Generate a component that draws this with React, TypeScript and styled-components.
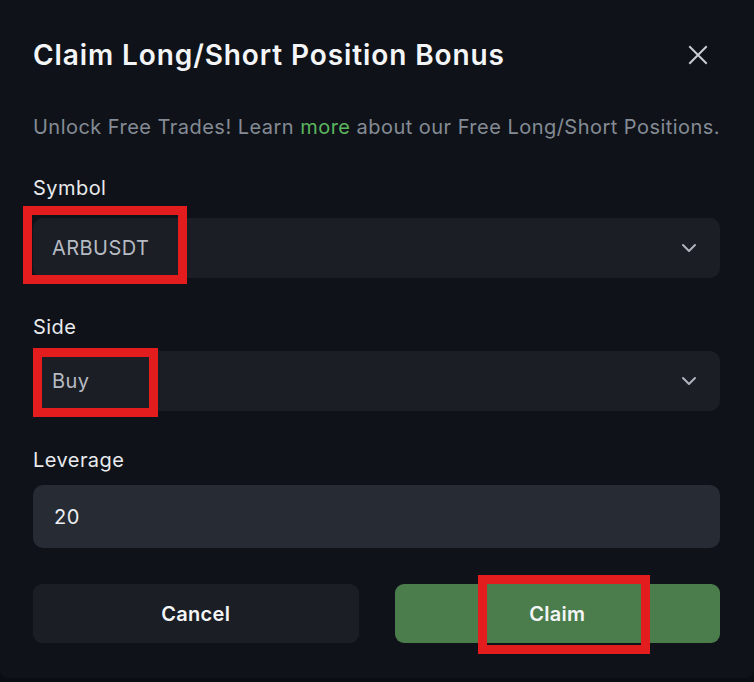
import React from "react";
import styled, { createGlobalStyle } from "styled-components";

const GlobalStyle = createGlobalStyle`
  html, body {
    margin: 0;
    padding: 0;
    background: #0a0d12;
  }
  * { box-sizing: border-box; }
`;

const Dialog = styled.div`
  width: 754px;
  padding: 38px 34px 35px 33px;
  background: #0f1319;
  border-radius: 0 0 8px 8px;
  font-family: Inter, "Noto Sans", sans-serif;
  display: flex;
  flex-direction: column;
`;

const Header = styled.div`
  display: flex;
  align-items: center;
  justify-content: space-between;
  height: 34px;
`;

const Title = styled.h2`
  margin: 0;
  font-size: 28px;
  line-height: 34px;
  font-weight: 600;
  color: #f4f5f7;
  letter-spacing: 0.9px;
`;

const CloseButton = styled.button`
  width: 20px;
  height: 20px;
  margin-right: 12px;
  padding: 0;
  border: 0;
  background: transparent;
  display: flex;
  align-items: center;
  justify-content: center;
  color: #c9cdd3;
  cursor: pointer;
`;

const Body = styled.div`
  margin-top: 43px;
  display: flex;
  flex-direction: column;
  gap: 37px;
`;

const Subtitle = styled.p`
  margin: 0;
  font-size: 20px;
  line-height: 24px;
  color: #858b95;
  letter-spacing: 0.47px;
  white-space: nowrap;
`;

const MoreLink = styled.a`
  color: #5db55e;
  text-decoration: none;
`;

const Field = styled.div<{ $gap: number }>`
  display: flex;
  flex-direction: column;
  gap: ${(p) => p.$gap}px;
`;

const Label = styled.label`
  font-size: 20px;
  line-height: 24px;
  color: #e8eaed;
  letter-spacing: 0.45px;
`;

const FieldBox = styled.div`
  position: relative;
`;

const Select = styled.div`
  height: 60px;
  border-radius: 10px;
  background: #1b1e25;
  display: flex;
  align-items: center;
  justify-content: space-between;
  padding: 0 19px 0 19px;
  font-size: 20px;
  color: #b6bac2;
  letter-spacing: 0.45px;
`;

const Chevron = styled.span`
  display: flex;
  color: #aeb3bc;
`;

const Input = styled.div`
  height: 63px;
  border-radius: 10px;
  background: #272b33;
  display: flex;
  align-items: center;
  padding: 0 21px;
  font-size: 20px;
  color: #eceef1;
  letter-spacing: 0.45px;
`;

const Actions = styled.div`
  display: grid;
  grid-template-columns: 1fr 1fr;
  gap: 36px;
  margin-top: -1px;
`;

const ActionButton = styled.button<{ $primary?: boolean }>`
  position: relative;
  height: 59px;
  border: 0;
  border-radius: 9px;
  background: ${(p) => (p.$primary ? "#4a7d4b" : "#1b1e25")};
  color: #f4f5f7;
  font-family: Inter, "Noto Sans", sans-serif;
  font-size: 20px;
  font-weight: 600;
  letter-spacing: 0.3px;
  cursor: pointer;
`;

const Highlight = styled.div<{ $l: number; $t: number; $w: number; $h: number }>`
  position: absolute;
  left: ${(p) => p.$l}px;
  top: ${(p) => p.$t}px;
  width: ${(p) => p.$w}px;
  height: ${(p) => p.$h}px;
  border: 9px solid #e31c1d;
  pointer-events: none;
`;

const ChevronIcon = () => (
  <svg width="24" height="24" viewBox="0 0 24 24" fill="none" stroke="currentColor" strokeWidth="2" strokeLinecap="round" strokeLinejoin="round">
    <path d="m6 9 6 6 6-6" />
  </svg>
);

export default function App() {
  return (
    <>
      <GlobalStyle />
      <Dialog>
        <Header>
          <Title>Claim Long/Short Position Bonus</Title>
          <CloseButton aria-label="Close">
            <svg width="20" height="20" viewBox="0 0 20 20" fill="none" stroke="currentColor" strokeWidth="2" strokeLinecap="square">
              <path d="M2 2 L18 18 M18 2 L2 18" />
            </svg>
          </CloseButton>
        </Header>
        <Body>
          <Subtitle>
            Unlock Free Trades! Learn <MoreLink href="#">more</MoreLink> about our Free Long/Short Positions.
          </Subtitle>
          <Field $gap={18}>
            <Label>Symbol</Label>
            <FieldBox>
              <Select>
                <span>ARBUSDT</span>
                <Chevron><ChevronIcon /></Chevron>
              </Select>
              <Highlight $l={-10} $t={-12} $w={164} $h={78} />
            </FieldBox>
          </Field>
          <Field $gap={12}>
            <Label>Side</Label>
            <FieldBox>
              <Select>
                <span>Buy</span>
                <Chevron><ChevronIcon /></Chevron>
              </Select>
              <Highlight $l={0} $t={-3} $w={125} $h={69} />
            </FieldBox>
          </Field>
          <Field $gap={13}>
            <Label>Leverage</Label>
            <Input>20</Input>
          </Field>
          <Actions>
            <ActionButton>Cancel</ActionButton>
            <ActionButton $primary>
              Claim
              <Highlight $l={83} $t={-9} $w={172} $h={79} />
            </ActionButton>
          </Actions>
        </Body>
      </Dialog>
    </>
  );
}
